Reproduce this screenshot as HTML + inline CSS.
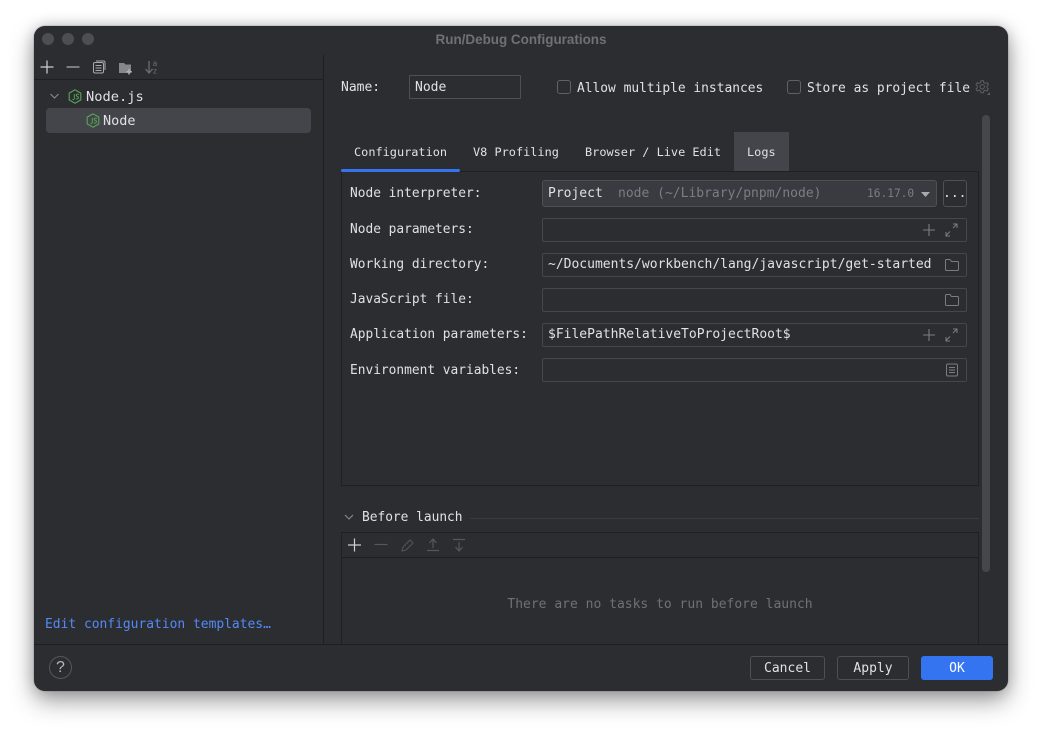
<!DOCTYPE html>
<html><head><meta charset="utf-8">
<style>
html,body{margin:0;padding:0;background:#fff;}
#p{position:relative;width:1042px;height:733px;overflow:hidden;background:#fff;font-family:"DejaVu Sans Mono","Liberation Mono",monospace;font-size:13px;color:#dfe1e5;filter:blur(.3px);}
#w{position:absolute;left:34px;top:26px;width:974px;height:665px;background:#2b2d30;border-radius:11px;box-shadow:0 0 1px #555,0 10px 24px rgba(0,0,0,.38),0 0 14px rgba(0,0,0,.18);}
.a{position:absolute;}
.t{position:absolute;white-space:pre;line-height:18px;height:18px;}
.lb{font-size:12.85px;}
.tb{font-size:11.9px;}
.f{position:absolute;box-sizing:border-box;left:542px;width:425px;height:24px;border:1px solid #45474b;border-radius:2px;}
.l{position:absolute;background:#1e1f22;}
svg{position:absolute;overflow:visible;}
</style></head><body>
<div id="p">
<div id="w"></div>
<div class="a" style="left:42px;top:33px;width:12px;height:12px;border-radius:50%;background:#4c4e52"></div>
<div class="a" style="left:62px;top:33px;width:12px;height:12px;border-radius:50%;background:#4c4e52"></div>
<div class="a" style="left:82px;top:33px;width:12px;height:12px;border-radius:50%;background:#4c4e52"></div>
<div class="t" style="left:34px;width:974px;top:31px;text-align:center;color:#6f7175;font-weight:bold;font-family:'Liberation Sans',sans-serif;font-size:13.45px">Run/Debug Configurations</div>

<div class="l" style="left:34px;top:79px;width:289px;height:1px"></div>
<div class="l" style="left:323px;top:55px;width:1px;height:589px"></div>
<div class="l" style="left:34px;top:644px;width:974px;height:1px"></div>

<svg style="left:0;top:0" width="1042" height="733" fill="none" stroke-linecap="butt">
<!-- toolbar -->
<path d="M47 60.500v13M40.500 67h13" stroke="#ced0d6" stroke-width="1.200"/>
<path d="M66.500 67h13" stroke="#aeb0b5" stroke-width="1.200"/>
<rect x="93.500" y="62.500" width="10" height="10.500" rx="1.500" stroke="#a8aaae"/>
<path d="M96 61h7.500a1.500 1.500 0 0 1 1.500 1.500V70M95.500 65.500h6M95.500 68h6M95.500 70.500h6" stroke="#a8aaae"/>
<path d="M119 63h5l1.500 1.500h5.500V73h-12z" fill="#85878b"/>
<path d="M129 69v5.500M126.300 71.800h5.500" stroke="#b0b2b6" stroke-width="1.500"/>
<path d="M149 61v11M145.500 69l3.500 4 3.500-4" stroke="#6a6c70" stroke-width="1.300"/>
<text x="152.500" y="66" font-size="8" fill="#6a6c70" font-family="DejaVu Sans Mono">a</text>
<text x="152.500" y="73.500" font-size="8" fill="#6a6c70" font-family="DejaVu Sans Mono">z</text>
<!-- tree -->
<path d="M50.500 94l4 4 4-4" stroke="#8a8c90" stroke-width="1.100"/>
</svg>

<div class="a" style="left:46px;top:108px;width:265px;height:25px;background:#43454a;border-radius:4px"></div>
<svg style="left:68px;top:89px" width="14" height="15" viewBox="0 0 14 15" fill="none"><path d="M7 .8l5.800 3.300v6.800L7 14.200 1.200 10.900V4.100z" stroke="#55a655" stroke-width="1.100"/><path d="M6.300 5v4.500q0 1.300-1.800.9M11 5.600Q9 4.500 8.200 5.800q-.4 1 1.200 1.600 1.600.6 1 1.900-.8 1.200-2.600.3" stroke="#55a655" stroke-width=".9"/></svg>
<div class="t" style="left:86px;top:88px;font-size:13.7px">Node.js</div>
<svg style="left:86px;top:113px" width="14" height="15" viewBox="0 0 14 15" fill="none"><path d="M7 .8l5.800 3.300v6.800L7 14.200 1.200 10.900V4.100z" stroke="#55a655" stroke-width="1.100"/><path d="M6.300 5v4.500q0 1.300-1.800.9M11 5.600Q9 4.500 8.200 5.800q-.4 1 1.200 1.600 1.600.6 1 1.900-.8 1.200-2.600.3" stroke="#55a655" stroke-width=".9"/></svg>
<div class="t" style="left:103px;top:112px;font-size:13.5px">Node</div>

<div class="t" style="left:45px;top:616px;color:#548af7;font-size:12.95px">Edit configuration templates…</div>
<div class="a" style="box-sizing:border-box;left:49px;top:656px;width:23px;height:23px;border:1px solid #55575b;border-radius:50%;text-align:center;line-height:21px;color:#b4b6ba;font-size:16px;font-family:'Liberation Sans',sans-serif">?</div>

<!-- name row -->
<div class="t" style="left:341px;top:79px">Name:</div>
<div class="a" style="box-sizing:border-box;left:409px;top:75px;width:112px;height:24px;border:1px solid #4e5054;border-radius:1px"></div>
<div class="t" style="left:415px;top:79px">Node</div>
<div class="a" style="box-sizing:border-box;left:557px;top:80px;width:14px;height:14px;border:1px solid #5f6165;border-radius:3px"></div>
<div class="t" style="left:577px;top:80px;font-size:12.9px">Allow multiple instances</div>
<div class="a" style="box-sizing:border-box;left:787px;top:80px;width:14px;height:14px;border:1px solid #5f6165;border-radius:3px"></div>
<div class="t" style="left:807px;top:80px;font-size:12.9px">Store as project file</div>
<svg style="left:975px;top:80px" width="15" height="15" viewBox="0 0 15 15" fill="none"><path d="M6 .8h2.400l.4 1.800 1.700.8 1.700-.8 1.200 2-1.300 1.300v1.800l1.300 1.300-1.200 2-1.700-.8-1.700.8-.4 1.800H6l-.4-1.800-1.700-.8-1.700.8-1.200-2 1.300-1.300V5.900L1 4.600l1.200-2 1.700.8 1.700-.8z" stroke="#5d5f63"/><circle cx="7.200" cy="6.800" r="2.200" stroke="#5d5f63"/><path d="M15 12v3h-3z" fill="#5d5f63"/></svg>

<!-- scrollbar -->
<div class="a" style="left:982px;top:115px;width:8px;height:457px;background:#45474a;border-radius:4px"></div>

<!-- tabs -->
<div class="a" style="left:734px;top:132px;width:55px;height:39px;background:#43454a"></div>
<div class="t tb" style="left:354px;top:143px">Configuration</div>
<div class="t tb" style="left:473px;top:143px">V8 Profiling</div>
<div class="t tb" style="left:585px;top:143px">Browser / Live Edit</div>
<div class="t tb" style="left:747px;top:143px">Logs</div>
<div class="a" style="left:341px;top:169px;width:119px;height:3px;background:#3574f0;border-radius:2px;z-index:2"></div>

<!-- config panel -->
<div class="a" style="box-sizing:border-box;left:341px;top:171px;width:638px;height:315px;border:1px solid #1f2023"></div>

<div class="t lb" style="left:350px;top:185px">Node interpreter:</div>
<div class="t lb" style="left:350px;top:221px">Node parameters:</div>
<div class="t lb" style="left:350px;top:256px">Working directory:</div>
<div class="t lb" style="left:350px;top:291px">JavaScript file:</div>
<div class="t lb" style="left:350px;top:326px">Application parameters:</div>
<div class="t lb" style="left:350px;top:362px">Environment variables:</div>

<div class="a" style="box-sizing:border-box;left:542px;top:180px;width:395px;height:27px;background:#393b40;border:1px solid #4e5054;border-radius:3px"></div>
<div class="t" style="left:548px;top:185px">Project</div>
<div class="t" style="left:618px;top:185px;color:#7b7d82">node (~/Library/pnpm/node)</div>
<div class="t" style="left:867px;top:185px;color:#7b7d82;font-size:11.2px">16.17.0</div>
<svg style="left:921px;top:192px" width="9" height="5"><path d="M0 0h9L4.500 5z" fill="#a8aaae"/></svg>
<div class="a" style="box-sizing:border-box;left:943px;top:180px;width:24px;height:27px;border:1px solid #4e5054;border-radius:3px"></div>
<div class="t" style="left:943px;top:185px;color:#dfe1e5;font-size:13px">...</div>

<div class="f" style="top:218px"></div>
<div class="f" style="top:253px"></div>
<div class="t" style="left:548px;top:256px">~/Documents/workbench/lang/javascript/get-started</div>
<div class="f" style="top:288px"></div>
<div class="f" style="top:323px"></div>
<div class="t" style="left:548px;top:326px">$FilePathRelativeToProjectRoot$</div>
<div class="f" style="top:358px"></div>

<svg style="left:0;top:0" width="1042" height="733" fill="none">
<path d="M929 224v12M923 230h12" stroke="#7b7d82" stroke-width="1.100"/>
<path d="M946 235.500l4-4M946 232v4h4M953 228l4-4M953 224h4v4" stroke="#7b7d82"/>
<path d="M929 329v12M923 335h12" stroke="#7b7d82" stroke-width="1.100"/>
<path d="M946 340.500l4-4M946 337v4h4M953 333l4-4M953 329h4v4" stroke="#7b7d82"/>
<path d="M945.500 260.500a1 1 0 0 1 1-1h3.500l1.500 2h6a1 1 0 0 1 1 1v7a1 1 0 0 1-1 1h-11a1 1 0 0 1-1-1z" stroke="#7b7d82"/>
<path d="M945.500 295.500a1 1 0 0 1 1-1h3.500l1.500 2h6a1 1 0 0 1 1 1v7a1 1 0 0 1-1 1h-11a1 1 0 0 1-1-1z" stroke="#7b7d82"/>
<rect x="946.500" y="364" width="11" height="12" rx="1.500" stroke="#7b7d82"/>
<path d="M949 367.500h6M949 370h6M949 372.500h6" stroke="#7b7d82"/>
<!-- before launch -->
<path d="M345 515l4 4 4-4" stroke="#8a8c90" stroke-width="1.100"/>
<path d="M470 518.500h509" stroke="#393b40"/>
<path d="M354.500 538.500v13M348 545h13" stroke="#ced0d6" stroke-width="1.200"/>
<path d="M374.500 544.500h13" stroke="#55575b" stroke-width="1.200"/>
<path d="M402 551l1-4 7-7 3 3-7 7z" stroke="#55575b"/>
<path d="M427 550.500h12M433 548v-9M429.500 543l3.500-4 3.500 4" stroke="#55575b" stroke-width="1.200"/>
<path d="M453 539.500h12M459 542v9M455.500 547l3.500 4 3.500-4" stroke="#55575b" stroke-width="1.200"/>
</svg>
<div class="t" style="left:362px;top:509px;font-size:12.85px">Before launch</div>
<div class="a" style="box-sizing:border-box;left:341px;top:532px;width:638px;height:112px;border:1px solid #1f2023;border-bottom:0"></div>
<div class="l" style="left:342px;top:557px;width:636px;height:1px"></div>
<div class="t" style="left:342px;width:636px;top:596px;text-align:center;color:#6f7175">There are no tasks to run before launch</div>

<!-- footer -->
<div class="a" style="box-sizing:border-box;left:750px;top:656px;width:75px;height:24px;border:1px solid #4e5054;border-radius:3px;text-align:center;line-height:23px;font-size:13px">Cancel</div>
<div class="a" style="box-sizing:border-box;left:837px;top:656px;width:72px;height:24px;border:1px solid #4e5054;border-radius:3px;text-align:center;line-height:23px;font-size:13px">Apply</div>
<div class="a" style="left:921px;top:656px;width:72px;height:24px;background:#3574f0;border-radius:3px;text-align:center;line-height:25px;color:#fff;font-size:13px">OK</div>
</div>
</body></html>
